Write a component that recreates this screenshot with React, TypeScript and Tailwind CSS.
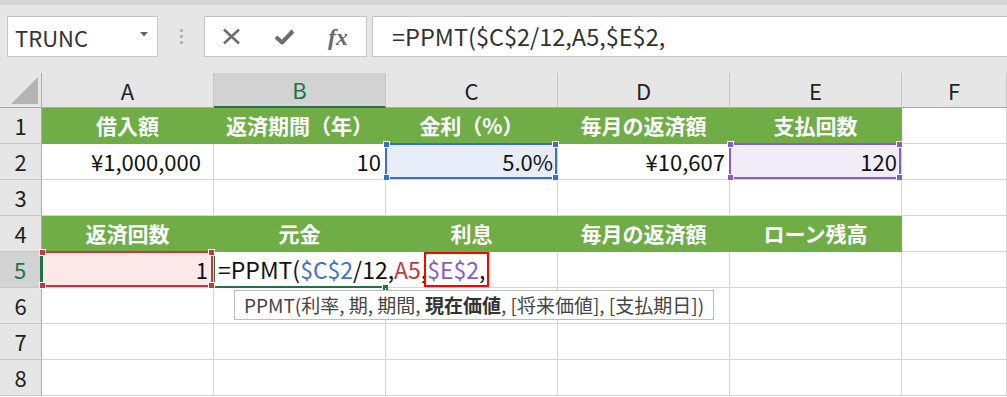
import React from 'react';

const GREEN = 'bg-[#70ad47] border-[#70ad47] text-white font-bold text-[21px] flex items-center justify-center';
const GRID = 'relative border-r border-b border-[#d4d4d4]';

function Handles({ color }: { color: string }) {
  const base = `absolute w-[7px] h-[7px] border border-white ${color}`;
  return (
    <>
      <span className={`${base} -left-[4px] -top-[4px]`} />
      <span className={`${base} -right-[4px] -top-[4px]`} />
      <span className={`${base} -left-[4px] -bottom-[4px]`} />
      <span className={`${base} -right-[4px] -bottom-[4px]`} />
    </>
  );
}

function Header({ label, active }: { label: string; active?: boolean }) {
  return (
    <div
      className={
        active
          ? 'flex items-center justify-center bg-[#d2d2d2] border-r border-[#c6c6c6] border-b-2 border-b-[#217346] text-[#217346] text-[22px]'
          : 'flex items-center justify-center bg-[#e6e6e6] border-r border-[#c6c6c6] border-b border-b-[#ababab] text-[#222] text-[22px]'
      }
    >
      {label}
    </div>
  );
}

function RowNum({ n, active }: { n: number; active?: boolean }) {
  return (
    <div
      className={
        active
          ? 'flex items-center justify-center bg-[#d2d2d2] border-b border-[#c6c6c6] border-r-2 border-r-[#217346] text-[#217346] text-[22px]'
          : 'flex items-center justify-center bg-[#e6e6e6] border-b border-[#c6c6c6] border-r border-r-[#ababab] text-[#222] text-[22px]'
      }
    >
      {n}
    </div>
  );
}

function Value({ children, pr = 'pr-[4px]' }: { children?: React.ReactNode; pr?: string }) {
  return (
    <div className={`${GRID} flex items-center justify-end ${pr} text-[22px] text-[#111]`}>{children}</div>
  );
}

function Empty() {
  return <div className={GRID} />;
}

export default function App() {
  const row1 = ['借入額', '返済期間（年）', '金利（%）', '毎月の返済額', '支払回数'];
  const row4 = ['返済回数', '元金', '利息', '毎月の返済額', 'ローン残高'];

  return (
    <div className="w-[1007px] h-[397px] overflow-hidden bg-white font-['Noto_Sans_CJK_JP','Noto_Sans',sans-serif]">
      {/* formula bar */}
      <div className="h-[5px] bg-[#d6d6d6]" />
      <div className="h-[68px] bg-[#e6e6e6] flex items-start pt-[11px] pl-[7px]">
        <div className="w-[151px] h-[41px] bg-white border border-[#c6c6c6] flex items-center justify-between pl-[7px] pr-[9px]">
          <span className="text-[22px] text-[#333] leading-none">TRUNC</span>
          <svg width="8" height="5" viewBox="0 0 8 5" className="mb-[4px]">
            <path d="M0 0 L8 0 L4 4.5 Z" fill="#666" />
          </svg>
        </div>
        <div className="w-[46px] h-[41px] flex flex-col items-center justify-center gap-[3px]">
          <span className="w-[3px] h-[3px] bg-[#b5b5b5]" />
          <span className="w-[3px] h-[3px] bg-[#b5b5b5]" />
          <span className="w-[3px] h-[3px] bg-[#b5b5b5]" />
        </div>
        <div className="w-[163px] h-[41px] bg-white border border-[#c6c6c6] flex items-center pl-[17px] gap-[33px]">
          <svg width="19" height="17" viewBox="0 0 19 17">
            <path d="M2 1.5 L17 15.5 M17 1.5 L2 15.5" stroke="#6e6e6e" strokeWidth="2.6" />
          </svg>
          <svg width="21" height="17" viewBox="0 0 21 17">
            <path d="M2 9 L8 14.5 L19 3" stroke="#6e6e6e" strokeWidth="4" fill="none" strokeLinejoin="round" />
          </svg>
          <span className="font-['Liberation_Serif',serif] italic font-bold text-[24px] text-[#6a6a6a] leading-none">fx</span>
        </div>
        <div className="flex-1 ml-[5px] mr-[-2px] h-[41px] bg-white border border-[#c6c6c6] flex items-center pl-[19px] text-[23.5px] text-[#333] whitespace-nowrap">
          =PPMT($C$2/12,A5,$E$2,
        </div>
      </div>

      {/* sheet */}
      <div className="grid grid-cols-[42px_172px_172px_172px_172px_172px_105px] grid-rows-[35px_repeat(8,36px)]">
        <div className="relative bg-[#e6e6e6] border-r border-b border-[#ababab]">
          <svg width="28" height="28" viewBox="0 0 28 28" className="absolute left-[11px] top-[4px]">
            <path d="M0 27 L27 27 L27 0 Z" fill="#b4b4b4" />
          </svg>
        </div>
        <Header label="A" />
        <Header label="B" active />
        <Header label="C" />
        <Header label="D" />
        <Header label="E" />
        <Header label="F" />

        {/* row 1 */}
        <RowNum n={1} />
        {row1.map((t) => (
          <div key={t} className={`border-r border-b ${GREEN}`}>{t}</div>
        ))}
        <Empty />

        {/* row 2 */}
        <RowNum n={2} />
        <Value pr="pr-[12px]">¥1,000,000</Value>
        <Value>10</Value>
        <div className={`${GRID} z-10 bg-[#e8eef9] flex items-center justify-end pr-[4px] text-[22px] text-[#111]`}>
          5.0%
          <div className="absolute -left-[1px] -top-[1px] right-0 bottom-0 border-2 border-[#3b6fcb]">
            <Handles color="bg-[#3b6fcb]" />
          </div>
        </div>
        <Value>¥10,607</Value>
        <div className={`${GRID} z-10 bg-[#f0ecf8] flex items-center justify-end pr-[4px] text-[22px] text-[#111]`}>
          120
          <div className="absolute -left-[1px] -top-[1px] right-0 bottom-0 border-2 border-[#8a5cc0]">
            <Handles color="bg-[#8a5cc0]" />
          </div>
        </div>
        <Empty />

        {/* row 3 */}
        <RowNum n={3} />
        <Empty />
        <Empty />
        <Empty />
        <Empty />
        <Empty />
        <Empty />

        {/* row 4 */}
        <RowNum n={4} />
        {row4.map((t) => (
          <div key={t} className={`border-r border-b ${GREEN}`}>{t}</div>
        ))}
        <Empty />

        {/* row 5 */}
        <RowNum n={5} active />
        <div className={`${GRID} z-20 bg-[#fbe9e9] flex items-center justify-end pr-[5px] text-[22px] text-[#111]`}>
          1
          <div className="absolute -left-[1px] -top-[1px] right-0 bottom-0 border-2 border-[#c4373f] border-l-[#217346]">
            <Handles color="bg-[#c4373f]" />
          </div>
        </div>
        <div className={`${GRID} z-10`}>
          <div className="absolute left-0 top-0 h-[35px] w-[285px] bg-white flex items-stretch pl-[4px] text-[23px] leading-none whitespace-nowrap text-[#111]">
            <span className="flex items-center">=PPMT(</span>
            <span className="flex items-center text-[#4472c4]">$C$2</span>
            <span className="flex items-center">/12,</span>
            <span className="flex items-center text-[#c0393f]">A5</span>
            <span className="flex items-center">,</span>
            <span className="flex items-center -ml-[3px] pl-[1px] pr-[2px] border-2 border-[#ff0000] text-[#8a5cc0]">
              $E$2<span className="text-[#111]">,</span>
            </span>
          </div>
          <span className="absolute -left-[1px] -top-[1px] -bottom-[1px] w-[2px] bg-[#217346]" />
          <span className="absolute left-0 -bottom-[1px] w-[168px] h-[2px] bg-[#217346]" />
          <span className="absolute -right-[4px] -bottom-[4px] w-[7px] h-[7px] border border-white bg-[#217346]" />
        </div>
        <Empty />
        <Empty />
        <Empty />
        <Empty />

        {/* row 6 */}
        <RowNum n={6} />
        <Empty />
        <div className={`${GRID} z-30`}>
          <div className="absolute left-[20px] top-[2px] h-[30px] bg-white border border-[#bdbdbd] flex items-center px-[9px] text-[19px] text-[#444] whitespace-nowrap">
            <span>
              PPMT(利率, 期, 期間, <b className="font-bold text-[#333]">現在価値</b>, [将来価値], [支払期日])
            </span>
          </div>
        </div>
        <Empty />
        <Empty />
        <Empty />
        <Empty />

        {/* rows 7, 8 */}
        {[7, 8].map((n) => (
          <React.Fragment key={n}>
            <RowNum n={n} />
            <Empty />
            <Empty />
            <Empty />
            <Empty />
            <Empty />
            <Empty />
          </React.Fragment>
        ))}
      </div>
    </div>
  );
}
